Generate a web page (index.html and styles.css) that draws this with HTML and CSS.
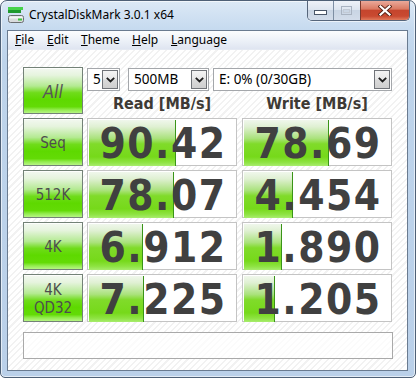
FILE: index.html
```html
<!DOCTYPE html>
<html>
<head>
<meta charset="utf-8">
<title>CrystalDiskMark</title>
<link rel="stylesheet" href="styles.css">
</head>
<body>
<div class="win">
  <div class="titlebar">
    <svg class="appicon" width="16" height="16" viewBox="0 0 16 16">
      <rect x="0" y="0" width="15" height="3" fill="#45d24a"/>
      <rect x="0" y="3" width="13" height="3" fill="#1f9a2e"/>
      <rect x="0.5" y="8.5" width="15" height="7" rx="2" fill="#d9dbdd" stroke="#6a6d70"/>
      <rect x="1.5" y="9.5" width="13" height="2" fill="#f4f5f6"/>
      <rect x="10" y="11.5" width="4" height="2" fill="#3cc43c"/>
    </svg>
    <span class="title">CrystalDiskMark 3.0.1 x64</span>
    <div class="caption">
      <div class="cbtn min">
        <svg width="14" height="6" viewBox="0 0 14 6"><rect x="0.5" y="0.5" width="12" height="4" fill="#fff" stroke="#4a5668"/></svg>
      </div>
      <div class="cbtn max">
        <svg width="12" height="10" viewBox="0 0 12 10"><rect x="0.5" y="0.5" width="10" height="8" fill="none" stroke="#a9b3c1"/><rect x="2.5" y="3.5" width="6" height="3" fill="none" stroke="#c2cad5"/></svg>
      </div>
      <div class="cbtn close">
        <svg width="14" height="11" viewBox="0 0 14 11"><path d="M2.5 1.5 L11.5 9.5 M11.5 1.5 L2.5 9.5" stroke="#5a2418" stroke-width="4" stroke-linecap="square"/><path d="M2.5 1.5 L11.5 9.5 M11.5 1.5 L2.5 9.5" stroke="#fff" stroke-width="2.2" stroke-linecap="square"/></svg>
      </div>
    </div>
  </div>
  <div class="client">
    <div class="menubar">
      <span class="mi"><u>F</u>ile</span>
      <span class="mi"><u>E</u>dit</span>
      <span class="mi"><u>T</u>heme</span>
      <span class="mi"><u>H</u>elp</span>
      <span class="mi"><u>L</u>anguage</span>
    </div>
    <div class="body">
      <div class="grid">
        <div class="btn all">All</div>
        <div class="head">
          <div class="selects">
            <div class="sel s-count"><span class="sel-text">5</span><span class="arrow"><svg width="9" height="6" viewBox="0 0 9 6"><path d="M0.8 0.8 L4.5 4.5 L8.2 0.8" fill="none" stroke="#1e1e1e" stroke-width="1.8"/></svg></span></div>
            <div class="sel s-size"><span class="sel-text">500MB</span><span class="arrow"><svg width="9" height="6" viewBox="0 0 9 6"><path d="M0.8 0.8 L4.5 4.5 L8.2 0.8" fill="none" stroke="#1e1e1e" stroke-width="1.8"/></svg></span></div>
            <div class="sel s-drive"><span class="sel-text">E: 0% (0/30GB)</span><span class="arrow"><svg width="9" height="6" viewBox="0 0 9 6"><path d="M0.8 0.8 L4.5 4.5 L8.2 0.8" fill="none" stroke="#1e1e1e" stroke-width="1.8"/></svg></span></div>
          </div>
          <div class="labels">
            <span class="lbl">Read [MB/s]</span>
            <span class="lbl">Write [MB/s]</span>
          </div>
        </div>

        <div class="btn">Seq</div>
        <div class="val"><div class="bar" style="width:87px"></div><span class="num">90.42</span></div>
        <div class="val"><div class="bar" style="width:85px"></div><span class="num">78.69</span></div>

        <div class="btn">512K</div>
        <div class="val"><div class="bar" style="width:85px"></div><span class="num">78.07</span></div>
        <div class="val"><div class="bar" style="width:49px"></div><span class="num">4.454</span></div>

        <div class="btn">4K</div>
        <div class="val"><div class="bar" style="width:54px"></div><span class="num">6.912</span></div>
        <div class="val"><div class="bar" style="width:38px"></div><span class="num">1.890</span></div>

        <div class="btn two">4K<br>QD32</div>
        <div class="val"><div class="bar" style="width:55px"></div><span class="num">7.225</span></div>
        <div class="val"><div class="bar" style="width:31px"></div><span class="num">1.205</span></div>
      </div>
      <div class="status"></div>
    </div>
  </div>
</div>
</body>
</html>
```

FILE: styles.css
```css
html, body {
  margin: 0;
  padding: 0;
  background: #ffffff;
}

.win {
  width: 416px;
  height: 378px;
  box-sizing: border-box;
  border: 1px solid #4e6076;
  border-radius: 7px 7px 5px 5px;
  background: linear-gradient(#dce9f6 0px, #c6daef 28px, #bed4eb 60px, #bad0e9 100%);
  box-shadow: inset 0 0 0 1px rgba(255, 255, 255, 0.6);
  display: flex;
  flex-direction: column;
  overflow: hidden;
}

/* ---------- title bar ---------- */
.titlebar {
  height: 29px;
  flex: none;
  display: flex;
  align-items: flex-start;
}

.appicon {
  display: block;
  margin: 6px 0 0 7px;
  flex: none;
}

.title {
  margin: 6px 0 0 5px;
  font-family: "Noto Sans", sans-serif;
  font-size: 12px;
  line-height: 15px;
  color: #000;
  white-space: nowrap;
}

.caption {
  margin-left: auto;
  margin-right: 5px;
  display: flex;
  height: 19px;
  border: 1px solid #56667b;
  border-top: none;
  border-radius: 0 0 5px 5px;
  overflow: hidden;
  box-shadow: 0 1px 0 rgba(255, 255, 255, 0.6);
}

.cbtn {
  display: flex;
  align-items: center;
  justify-content: center;
  height: 100%;
  box-sizing: border-box;
}

.cbtn.min {
  width: 26px;
  border-right: 1px solid #7d8ea3;
  background: linear-gradient(#eef2f8 0%, #dde5ef 45%, #c9d5e4 50%, #d2dcea 100%);
  padding-top: 4px;
}

.cbtn.max {
  width: 27px;
  border-right: 1px solid #7a3a2e;
  background: linear-gradient(#eef2f8 0%, #dde5ef 45%, #c9d5e4 50%, #d2dcea 100%);
}

.cbtn.close {
  width: 48px;
  background: linear-gradient(#eaa99a 0%, #da7a63 42%, #c5452d 50%, #c94a31 80%, #e07a5c 100%);
}

/* ---------- client ---------- */
.client {
  flex: 1;
  margin: 0 7px 6px 6px;
  border: 1px solid #6a7b90;
  display: flex;
  flex-direction: column;
  background-color: #ffffff;
  background-image: repeating-linear-gradient(135deg, #ffffff 0px, #ffffff 3px, #f2f2f2 3px, #f2f2f2 4.5px);
}

.menubar {
  height: 18px;
  flex: none;
  display: grid;
  grid-template-columns: 32px 34px 51px 39px auto;
  align-items: center;
  background: linear-gradient(#fcfdfe 0%, #eff3f9 45%, #dfe5f1 100%);
  border-bottom: 1px solid #e4e9f2;
  font-family: "Noto Sans", sans-serif;
  font-size: 12px;
  line-height: 16px;
  color: #000;
}

.mi {
  padding-left: 7px;
  white-space: nowrap;
}

.mi u {
  text-decoration-thickness: 1px;
  text-underline-offset: 1px;
}

.body {
  flex: 1;
  padding: 17px 0 0 15px;
}

.grid {
  display: grid;
  grid-template-columns: 60px 150px 151px;
  grid-template-rows: 47px 48px 48px 48px 48px;
  column-gap: 4px;
  row-gap: 4px;
}

/* ---------- green buttons ---------- */
.btn {
  box-sizing: border-box;
  border: 1px solid #738277;
  background: linear-gradient(#f3f8f1 0%, #e6f4de 16%, #b4ea92 40%, #6fdc1a 55%, #5ed900 70%, #63db06 86%, #93ec4f 93%, #b6f584 100%);
  box-shadow: inset 0 1px 0 rgba(255, 255, 255, 0.8);
  display: flex;
  align-items: center;
  justify-content: center;
  text-align: center;
  font-family: "DejaVu Sans Condensed", "DejaVu Sans", sans-serif;
  font-stretch: condensed;
  font-size: 15px;
  line-height: 18px;
  color: #4d4d4d;
  padding-top: 2px;
}

.btn.all {
  font-size: 18px;
  font-style: italic;
  color: #575757;
}

.btn.two {
  padding-top: 1px;
}

/* ---------- header ---------- */
.head {
  grid-column: 2 / 4;
  display: flex;
  flex-direction: column;
}

.selects {
  display: flex;
  margin-top: 1px;
  height: 23px;
}

.sel {
  box-sizing: border-box;
  height: 23px;
  border: 1px solid #a4a7ab;
  background: #fff;
  display: flex;
  align-items: center;
  padding: 1px 1px 1px 5px;
}

.s-count { width: 33px; margin-right: 8px; }
.s-size { width: 81px; margin-right: 4px; }
.s-drive { width: 179px; }

.sel-text {
  flex: 1;
  font-family: "Noto Sans", sans-serif;
  font-size: 13.5px;
  line-height: 19px;
  color: #000;
  white-space: nowrap;
  overflow: hidden;
}

.arrow {
  box-sizing: border-box;
  width: 16px;
  height: 19px;
  flex: none;
  border: 1px solid #707378;
  background: linear-gradient(#f4f4f4 0%, #e8e8e8 45%, #d9d9d9 55%, #cfcfcf 100%);
  display: flex;
  align-items: center;
  justify-content: center;
}

.labels {
  margin-top: auto;
  display: flex;
  height: 21px;
  align-items: center;
}

.lbl {
  width: 150px;
  text-align: center;
  font-family: "DejaVu Sans Condensed", "DejaVu Sans", sans-serif;
  font-stretch: condensed;
  font-weight: bold;
  font-size: 16px;
  line-height: 20px;
  color: #3e3a35;
  white-space: nowrap;
}

.lbl + .lbl {
  margin-left: 5px;
}

/* ---------- values ---------- */
.val {
  box-sizing: border-box;
  width: 150px;
  justify-self: end;
  border: 1px solid #c4c4c4;
  background: #ffffff;
  padding: 1px;
  display: grid;
}

.bar {
  grid-area: 1 / 1;
  justify-self: start;
  height: 100%;
  box-sizing: border-box;
  border-right: 1px solid #3a9418;
  background: linear-gradient(#f0f7ec 0%, #dff0d2 15%, #aae27c 40%, #80db2a 52%, #76d91a 80%, #8ee342 92%, #a8ec6e 100%);
}

.num {
  grid-area: 1 / 1;
  place-self: center;
  font-family: "DejaVu Sans Condensed", "DejaVu Sans", sans-serif;
  font-stretch: condensed;
  font-weight: bold;
  font-size: 42px;
  letter-spacing: 1.5px;
  line-height: 44px;
  color: #404040;
  padding-top: 2px;
  padding-left: 2px;
  white-space: nowrap;
}

/* ---------- status ---------- */
.status {
  margin-top: 10px;
  width: 370px;
  height: 27px;
  box-sizing: border-box;
  border: 1px solid #a9a9a9;
  background: rgba(255, 255, 255, 0.7);
}
```
